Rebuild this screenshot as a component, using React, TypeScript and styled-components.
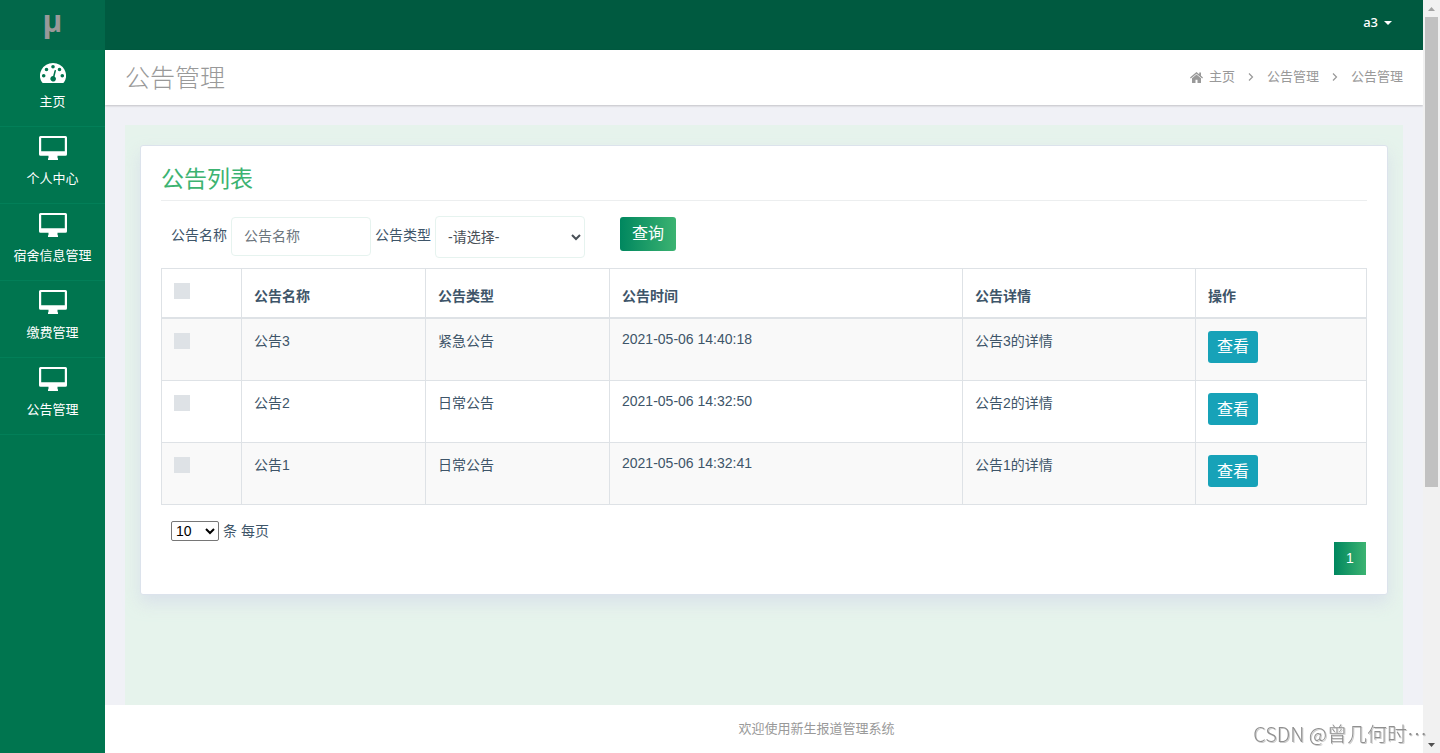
import React from 'react';
import styled, { createGlobalStyle } from 'styled-components';

const GlobalStyle = createGlobalStyle`
  *, *::before, *::after { box-sizing: border-box; }
  body {
    margin: 0;
    background: #f0f1f6;
    color: #3e5569;
    font-family: "Liberation Sans", "Noto Sans CJK SC", sans-serif;
    font-size: 14px;
    line-height: 21px;
  }
  a { color: inherit; text-decoration: none; }
  h1, h2, ul, ol { margin: 0; padding: 0; }
  ul, ol { list-style: none; }
`;

const Shell = styled.div`
  display: grid;
  grid-template-columns: 105px minmax(0, 1fr) 17px;
  min-height: 100vh;
`;

const Sidebar = styled.nav`
  background: #00754f;
  color: #fff;
`;

const Logo = styled.a`
  display: flex;
  align-items: center;
  justify-content: center;
  height: 50px;
  padding-bottom: 8px;
  background: #02684a;
  color: #999;
  font: 700 30px/42px "Open Sans", sans-serif;
`;

const NavLink = styled.a`
  display: flex;
  flex-direction: column;
  align-items: center;
  gap: 9px;
  height: 77px;
  padding-top: 9px;
  border-bottom: 1px solid #027f58;
  font-size: 13px;
  line-height: 20px;
`;

const NavIcon = styled.span`
  display: flex;
  align-items: flex-end;
  height: 24px;
  svg { display: block; }
`;

const Main = styled.div`
  display: flex;
  flex-direction: column;
`;

const TopBar = styled.header`
  display: flex;
  align-items: center;
  justify-content: flex-end;
  height: 50px;
  padding: 0 31px 6px 0;
  background: #005a40;
`;

const UserButton = styled.button`
  display: flex;
  align-items: center;
  gap: 6px;
  padding: 0;
  border: 0;
  background: none;
  color: #fff;
  font: 500 13px/20px "Noto Sans", sans-serif;
`;

const Caret = styled.span`
  margin-top: 2px;
  border: 4px solid transparent;
  border-top-color: #fff;
  border-bottom: 0;
`;

const PageHead = styled.div`
  display: flex;
  align-items: center;
  justify-content: space-between;
  height: 55px;
  padding: 0 20px;
  background: #fff;
  color: #999;
  box-shadow: 0 1px 2px rgba(0, 0, 0, 0.2);
`;

const PageTitle = styled.h1`
  font-size: 25px;
  font-weight: 300;
  line-height: 36px;
`;

const Crumbs = styled.ol`
  display: flex;
  align-items: center;
  gap: 13px;
  padding-bottom: 1px;
  font-size: 13px;
  line-height: 20px;
  a { display: flex; align-items: center; gap: 6px; }
  li { display: flex; align-items: center; gap: 13px; }
  svg { display: block; }
`;

const Content = styled.main`
  flex: 1;
  margin: 20px 20px 0;
  padding: 20px 15px;
  background: #e6f3ec;
`;

const Card = styled.section`
  padding: 15px 20px 19px;
  border: 1px solid #dce3ec;
  border-radius: 3px;
  background: #fff;
  box-shadow: 0 8px 16px rgba(208, 214, 232, 0.6);
`;

const CardTitle = styled.h2`
  padding-bottom: 3px;
  border-bottom: 1px solid #eceeef;
  color: #3cb371;
  font-size: 23px;
  font-weight: 400;
  line-height: 36px;
`;

const SearchForm = styled.form`
  display: flex;
  align-items: flex-start;
  gap: 4px;
  padding: 15px 10px 10px;
  label { line-height: 38px; }
`;

const fieldStyle = `
  border: 1px solid #e6f3ef;
  border-radius: 4px;
  background: #fff;
  color: #495057;
  font: inherit;
`;

const TextField = styled.input`
  ${fieldStyle}
  width: 140px;
  height: 39px;
  margin-top: 1px;
  padding: 0 12px 2px;
  &::placeholder { color: #6c757d; opacity: 1; }
`;

const SelectField = styled.select`
  ${fieldStyle}
  width: 150px;
  height: 42px;
  padding: 0 0 0 8px;
`;

const SearchButton = styled.button`
  width: 56px;
  height: 34px;
  margin: 1px 0 0 31px;
  padding: 0 0 1px;
  border: 0;
  border-radius: 3px;
  background: linear-gradient(90deg, #00875f, #3cb371);
  color: #fff;
  font: inherit;
  font-size: 16px;
`;

const Table = styled.table`
  width: 100%;
  border-collapse: collapse;
  th, td {
    padding: 12px;
    border: 1px solid #dee2e6;
    text-align: left;
    vertical-align: top;
  }
  th {
    height: 49px;
    padding: 12px 12px 10px;
    border-bottom-width: 2px;
    vertical-align: bottom;
  }
  th:first-child { vertical-align: top; }
  td { height: 62px; }
  tbody tr:first-child td { height: 63px; }
  tbody tr:nth-child(odd) { background: #f9f9f9; }
  time { display: block; line-height: 16px; }
`;

const Check = styled.input`
  display: block;
  appearance: none;
  width: 16px;
  height: 16px;
  margin: 2px 0 0;
  background: #dee2e6;
`;

const ViewButton = styled.button`
  display: block;
  width: 50px;
  height: 32px;
  padding: 0;
  border: 0;
  border-radius: 3px;
  background: #17a2b8;
  color: #fff;
  font: inherit;
  font-size: 16px;
`;

const PageSize = styled.label`
  display: flex;
  align-items: flex-start;
  gap: 4px;
  padding: 16px 10px 0;
  select {
    width: 48px;
    height: 20px;
    padding: 0;
    border: 1px solid #767676;
    border-radius: 2px;
    background: #fff;
    color: #000;
    font: 14px "Liberation Sans", sans-serif;
  }
`;

const Pagination = styled.div`
  display: flex;
  justify-content: flex-end;
  padding-right: 1px;
`;

const PageButton = styled.button`
  width: 32px;
  height: 33px;
  padding: 0;
  border: 0;
  background: linear-gradient(90deg, #00875f, #3cb371);
  color: #fff;
  font: inherit;
`;

const Footer = styled.footer`
  height: 48px;
  padding-left: 105px;
  background: #fff;
  color: #999;
  font-size: 13px;
  line-height: 48px;
  text-align: center;
`;

const ScrollTrack = styled.div`
  display: flex;
  flex-direction: column;
  align-items: center;
  height: 100vh;
  background: #f1f1f1;
`;

const ScrollArrow = styled.span<{ $down?: boolean }>`
  display: flex;
  align-items: center;
  height: 17px;
  margin-top: ${(p) => (p.$down ? 'auto' : '0')};
  color: ${(p) => (p.$down ? '#505050' : '#a3a3a3')};
`;

const ScrollThumb = styled.div`
  width: 13px;
  height: 62.4%;
  background: #c1c1c1;
`;

const Watermark = styled.div`
  position: fixed;
  right: 13px;
  bottom: 4px;
  color: #8f8f8f;
  font: 300 20px/30px "Noto Sans CJK SC", sans-serif;
  text-shadow: 1px 1px 0 #ccc;
  white-space: nowrap;
  pointer-events: none;
`;

const DashboardIcon = () => (
  <svg width="26" height="20" viewBox="0 0 26 20.500" preserveAspectRatio="none" aria-hidden="true">
    <path
      fill="#fff"
      fillRule="evenodd"
      d="M13 0A13 13 0 0 0 2.100 20q.3.500.9.500H23q.6 0 .9-.5A13 13 0 0 0 13 0ZM3.700 11.200a1.800 1.800 0 1 0 0 3.600 1.800 1.800 0 0 0 0-3.600ZM6.500 4.900a1.800 1.800 0 1 0 0 3.600 1.800 1.800 0 0 0 0-3.600ZM13 2.100a1.800 1.800 0 1 0 0 3.600 1.800 1.800 0 0 0 0-3.600ZM19.500 4.900a1.800 1.800 0 1 0 0 3.600 1.800 1.800 0 0 0 0-3.600ZM22.300 11.200a1.800 1.800 0 1 0 0 3.600 1.800 1.800 0 0 0 0-3.600ZM14.500 7.600l-1.400 5.800a2.800 2.800 0 1 0 1.500.4l1.400-5.800a.8.8 0 0 0-1.500-.4Z"
    />
  </svg>
);

const MonitorIcon = () => (
  <svg width="28" height="24" viewBox="0 0 28 24" aria-hidden="true">
    <path
      fill="#fff"
      fillRule="evenodd"
      d="M1.500 0h25Q28 0 28 1.500v16.800q0 1.500-1.500 1.500h-8v2l.5 1v1.200H9v-1.200l.5-1v-2h-8Q0 19.800 0 18.300V1.500Q0 0 1.500 0ZM2.200 2v13.300h23.600V2Z"
    />
  </svg>
);

const HomeIcon = () => (
  <svg width="13" height="11" viewBox="0 0 13 11" fill="currentColor" aria-hidden="true">
    <path d="M6.500 0 0 5.500l.8.900L6.500 1.700l5.700 4.700.8-.9-2-1.700V.5H9.200v1.800ZM6.500 2.600 2 6.300V10.500q0 .5.500.5H5.500V7.700h2V11h3q.5 0 .5-.5V6.300Z" />
  </svg>
);

const ChevronIcon = () => (
  <svg width="6" height="8" viewBox="0 0 6 8" fill="none" stroke="currentColor" strokeWidth="1.200" aria-hidden="true">
    <path d="M1 .5 4.500 4 1 7.500" />
  </svg>
);

const menu = ['主页', '个人中心', '宿舍信息管理', '缴费管理', '公告管理'];

const columns = [
  { title: '公告名称', width: 184 },
  { title: '公告类型', width: 184 },
  { title: '公告时间', width: 353 },
  { title: '公告详情', width: 233 },
  { title: '操作', width: 171 },
];

const notices = [
  { name: '公告3', type: '紧急公告', time: '2021-05-06 14:40:18', detail: '公告3的详情' },
  { name: '公告2', type: '日常公告', time: '2021-05-06 14:32:50', detail: '公告2的详情' },
  { name: '公告1', type: '日常公告', time: '2021-05-06 14:32:41', detail: '公告1的详情' },
];

export default function App() {
  return (
    <>
      <GlobalStyle />
      <Shell>
        <Sidebar>
          <Logo href="#">μ</Logo>
          <ul>
            {menu.map((item, i) => (
              <li key={item}>
                <NavLink href="#">
                  <NavIcon>{i === 0 ? <DashboardIcon /> : <MonitorIcon />}</NavIcon>
                  {item}
                </NavLink>
              </li>
            ))}
          </ul>
        </Sidebar>
        <Main>
          <TopBar>
            <UserButton type="button">
              a3 <Caret />
            </UserButton>
          </TopBar>
          <PageHead>
            <PageTitle>公告管理</PageTitle>
            <Crumbs>
              <li>
                <a href="#"><HomeIcon />主页</a>
                <ChevronIcon />
              </li>
              <li>
                <a href="#">公告管理</a>
                <ChevronIcon />
              </li>
              <li>公告管理</li>
            </Crumbs>
          </PageHead>
          <Content>
            <Card>
              <CardTitle>公告列表</CardTitle>
              <SearchForm onSubmit={(e) => e.preventDefault()}>
                <label htmlFor="name">公告名称</label>
                <TextField id="name" placeholder="公告名称" />
                <label htmlFor="type">公告类型</label>
                <SelectField id="type">
                  <option>-请选择-</option>
                  <option>紧急公告</option>
                  <option>日常公告</option>
                </SelectField>
                <SearchButton type="submit">查询</SearchButton>
              </SearchForm>
              <Table>
                <colgroup>
                  <col style={{ width: 80 }} />
                  {columns.map((c) => (
                    <col key={c.title} style={{ width: c.width }} />
                  ))}
                </colgroup>
                <thead>
                  <tr>
                    <th><Check type="checkbox" aria-label="全选" /></th>
                    {columns.map((c) => (
                      <th key={c.title}>{c.title}</th>
                    ))}
                  </tr>
                </thead>
                <tbody>
                  {notices.map((n) => (
                    <tr key={n.name}>
                      <td><Check type="checkbox" aria-label={n.name} /></td>
                      <td>{n.name}</td>
                      <td>{n.type}</td>
                      <td><time>{n.time}</time></td>
                      <td>{n.detail}</td>
                      <td><ViewButton type="button">查看</ViewButton></td>
                    </tr>
                  ))}
                </tbody>
              </Table>
              <PageSize>
                <select defaultValue="10">
                  <option>10</option>
                  <option>25</option>
                  <option>50</option>
                </select>
                条 每页
              </PageSize>
              <Pagination>
                <PageButton type="button">1</PageButton>
              </Pagination>
            </Card>
          </Content>
          <Footer>欢迎使用新生报道管理系统</Footer>
        </Main>
        <ScrollTrack aria-hidden="true">
          <ScrollArrow>
            <svg width="7" height="4" viewBox="0 0 7 4"><path d="M0 4 3.500 0 7 4Z" fill="currentColor" /></svg>
          </ScrollArrow>
          <ScrollThumb />
          <ScrollArrow $down>
            <svg width="7" height="4" viewBox="0 0 7 4"><path d="M0 0h7L3.500 4Z" fill="currentColor" /></svg>
          </ScrollArrow>
        </ScrollTrack>
      </Shell>
      <Watermark>CSDN @曾几何时⋯</Watermark>
    </>
  );
}
